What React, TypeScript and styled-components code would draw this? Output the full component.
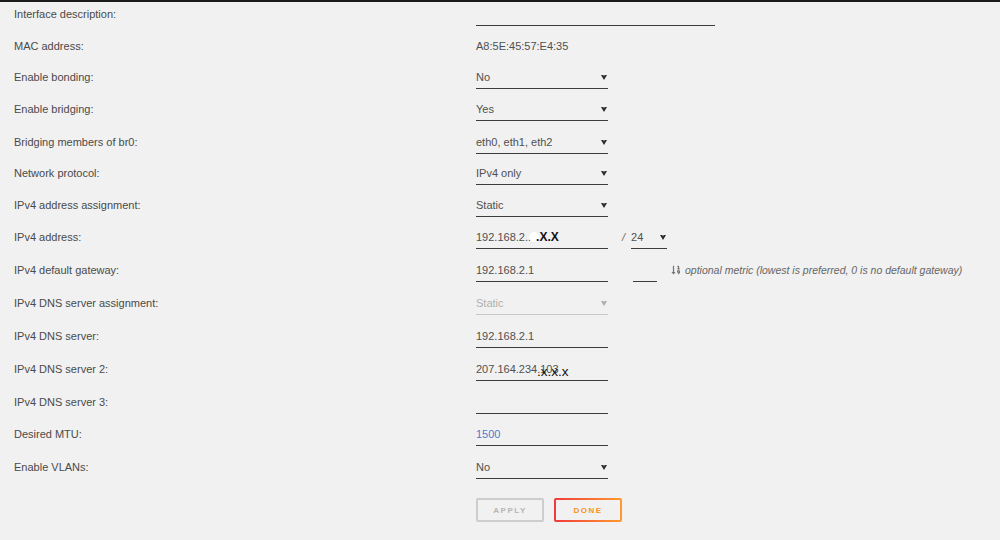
import React from "react";
import styled, {createGlobalStyle} from "styled-components";
import {FaSortNumericDown} from "react-icons/fa";

const GlobalStyle = createGlobalStyle`
    body {
        margin: 0;
        background: #f1f1f1;
        font-family: "Liberation Sans", Arial, sans-serif;
    }
`

type FieldProps = {
    width?: number;
    muted?: boolean;
}

// row pitch of the reference form is not quite even
const rowHeights = [32, 31, 32, 33, 31, 32, 32, 33, 33, 33, 33, 33, 32, 33, 33];

const Arrow = () => (
    <svg width="6" height="5" viewBox="0 0 6 5">
        <path d="M0 0 L2.4 0 L3 1.4 L3.6 0 L6 0 L3 5 Z" fill="#2a2a2a"/>
    </svg>
);

const Select = ({value, width = 132, muted}: {value: string} & FieldProps) => (
    <FieldBox width={width} muted={muted}>
        <Value muted={muted}>{value}</Value>
        <ArrowWrap muted={muted}><Arrow/></ArrowWrap>
    </FieldBox>
);

export default function App() {
    return (
        <Page>
            <GlobalStyle/>
            <Form>
                <Label>Interface description:</Label>
                <Field><FieldBox width={239}/></Field>

                <Label>MAC address:</Label>
                <Field><Plain>A8:5E:45:57:E4:35</Plain></Field>

                <Label>Enable bonding:</Label>
                <Field><Select value="No"/></Field>

                <Label>Enable bridging:</Label>
                <Field><Select value="Yes"/></Field>

                <Label>Bridging members of br0:</Label>
                <Field><Select value="eth0, eth1, eth2"/></Field>

                <Label>Network protocol:</Label>
                <Field><Select value="IPv4 only"/></Field>

                <Label>IPv4 address assignment:</Label>
                <Field><Select value="Static"/></Field>

                <Label>IPv4 address:</Label>
                <Field>
                    <FieldBox width={132}>
                        <Value>192.168.2..<Blob/><Redact>.X.X</Redact></Value>
                    </FieldBox>
                    <Slash>/</Slash>
                    <Select value="24" width={36}/>
                </Field>

                <Label>IPv4 default gateway:</Label>
                <Field>
                    <FieldBox width={132}><Value>192.168.2.1</Value></FieldBox>
                    <Metric><FieldBox width={24}/></Metric>
                    <Hint>
                        <FaSortNumericDown size={10}/>
                        <span>optional metric (lowest is preferred, 0 is no default gateway)</span>
                    </Hint>
                </Field>

                <Label>IPv4 DNS server assignment:</Label>
                <Field><Select value="Static" muted/></Field>

                <Label>IPv4 DNS server:</Label>
                <Field><FieldBox width={132}><Value>192.168.2.1</Value></FieldBox></Field>

                <Label>IPv4 DNS server 2:</Label>
                <Field>
                    <FieldBox width={132}>
                        <Value>207.164.234.103<Scribble>.x.x.x</Scribble></Value>
                    </FieldBox>
                </Field>

                <Label>IPv4 DNS server 3:</Label>
                <Field><FieldBox width={132}/></Field>

                <Label>Desired MTU:</Label>
                <Field><FieldBox width={132}><Value blue>1500</Value></FieldBox></Field>

                <Label>Enable VLANs:</Label>
                <Field><Select value="No"/></Field>

                <Buttons>
                    <Button>APPLY</Button>
                    <Button primary>DONE</Button>
                </Buttons>
            </Form>
        </Page>
    );
}

const Page = styled.div`
    height: 540px;
    box-sizing: border-box;
    border-top: 2px solid #1c1c1c;
    padding-left: 14px;
    overflow: hidden;
`

const Form = styled.div`
    display: grid;
    grid-template-columns: 462px 1fr;
    grid-template-rows: ${rowHeights.map(h => `${h}px`).join(" ")};
`

const Label = styled.div`
    font-size: 11px;
    line-height: 16px;
    padding-top: 4px;
    color: #4a4a4a;
`

const Field = styled.div`
    display: flex;
    align-items: flex-start;
    padding-top: 4px;
`

const FieldBox = styled.div<FieldProps>`
    position: relative;
    display: flex;
    align-items: center;
    justify-content: space-between;
    width: ${p => p.width ?? 132}px;
    height: 16px;
    padding-bottom: 3px;
    border-bottom: 1px solid ${p => (p.muted ? "#c8c8c8" : "#3c3c3c")};
`

const Value = styled.span<{muted?: boolean; blue?: boolean}>`
    position: relative;
    font-size: 11px;
    line-height: 16px;
    color: ${p => (p.muted ? "#b0b0b0" : p.blue ? "#4f7bcc" : "#505050")};
    white-space: nowrap;
`

const Plain = styled.span`
    font-size: 11px;
    line-height: 16px;
    color: #505050;
`

const ArrowWrap = styled.span<{muted?: boolean}>`
    display: flex;
    margin-right: 1px;
    opacity: ${p => (p.muted ? 0.35 : 1)};
`

const Blob = styled.span`
    display: inline-block;
    width: 10px;
    height: 10px;
    margin: 0 -3px 0 -2px;
    border-radius: 50%;
    background: #fff;
    vertical-align: -1px;
`

const Redact = styled.span`
    position: relative;
    font-size: 12px;
    font-weight: 700;
    color: #111;
`

const Scribble = styled.span`
    position: absolute;
    left: 61px;
    top: 3px;
    font-size: 13.5px;
    color: #111;
`

const Slash = styled.span`
    font-size: 11px;
    line-height: 16px;
    font-style: italic;
    color: #666;
    margin: 0 6px 0 14px;
`

const Metric = styled.div`
    margin: 0 14px 0 25px;
`

const Hint = styled.div`
    display: flex;
    align-items: center;
    gap: 4px;
    height: 16px;
    font-size: 10.5px;
    font-style: italic;
    color: #666;
    white-space: nowrap;

    svg {
        color: #777;
    }
`

const Buttons = styled.div`
    grid-column: 2;
    display: flex;
    gap: 10px;
    padding-top: 10px;
`

const Button = styled.button<{primary?: boolean}>`
    width: 68px;
    height: 24px;
    box-sizing: border-box;
    font-family: "Liberation Sans", Arial, sans-serif;
    font-size: 8px;
    font-weight: 700;
    letter-spacing: 1.5px;
    border-radius: 2px;
    border: 2px solid ${p => (p.primary ? "transparent" : "#cdcdcd")};
    color: ${p => (p.primary ? "#f7931e" : "#b5b5b5")};
    background: ${p => (p.primary
        ? "linear-gradient(#f1f1f1, #f1f1f1) padding-box, linear-gradient(90deg, #f03a3a, #ff9a30) border-box"
        : "#f1f1f1")};
    cursor: pointer;
`
